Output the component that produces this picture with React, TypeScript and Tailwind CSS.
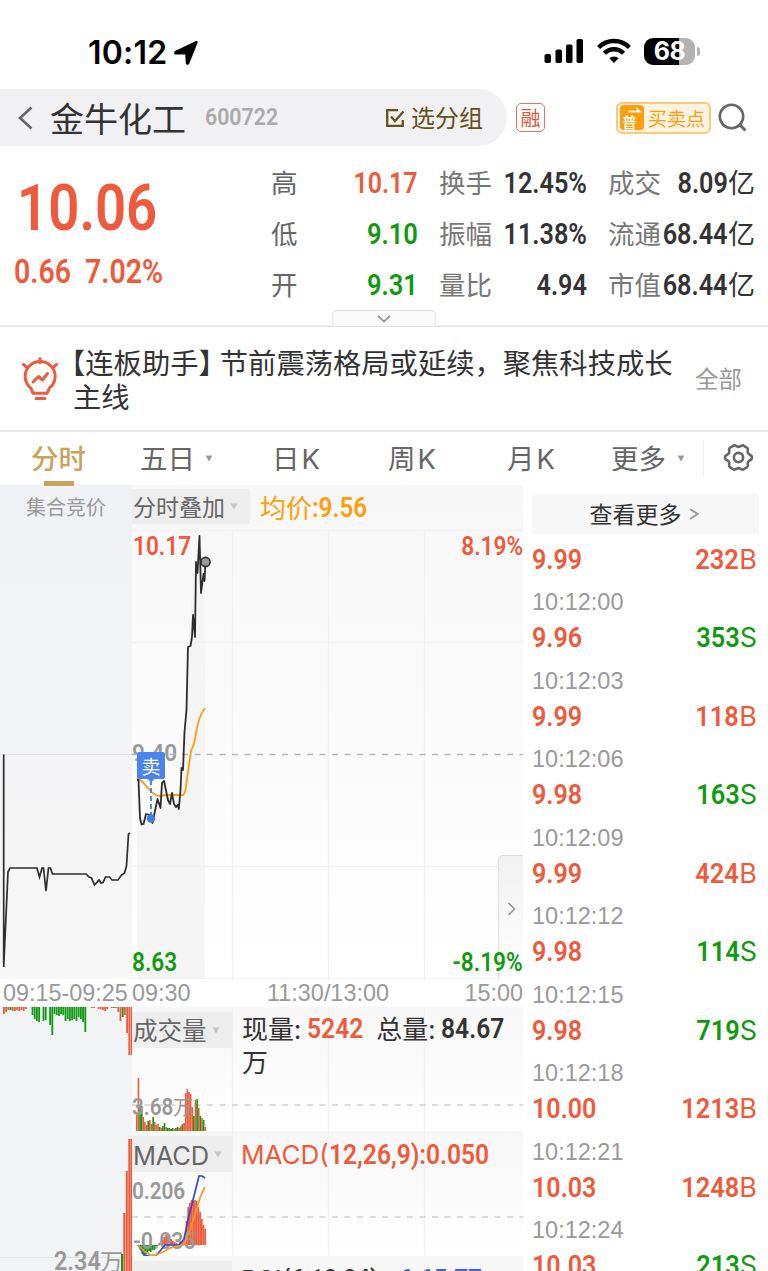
import { ReactNode } from "react";
import clsx from "clsx";

type Side = "B" | "S";

interface Trade {
    price: string;
    volume: string;
    side: Side;
    time: string;
}

interface Stat {
    label: string;
    value: string;
    unit?: string;
}

const trades: Trade[] = [
    { price: "9.99", volume: "232", side: "B", time: "10:12:00" },
    { price: "9.96", volume: "353", side: "S", time: "10:12:03" },
    { price: "9.99", volume: "118", side: "B", time: "10:12:06" },
    { price: "9.98", volume: "163", side: "S", time: "10:12:09" },
    { price: "9.99", volume: "424", side: "B", time: "10:12:12" },
    { price: "9.98", volume: "114", side: "S", time: "10:12:15" },
    { price: "9.98", volume: "719", side: "S", time: "10:12:18" },
    { price: "10.00", volume: "1213", side: "B", time: "10:12:21" },
    { price: "10.03", volume: "1248", side: "B", time: "10:12:24" },
    { price: "10.03", volume: "213", side: "S", time: "" },
];

const turnoverStats: Stat[] = [
    { label: "换手", value: "12.45%" },
    { label: "振幅", value: "11.38%" },
    { label: "量比", value: "4.94" },
];

const marketStats: Stat[] = [
    { label: "成交", value: "8.09", unit: "亿" },
    { label: "流通", value: "68.44", unit: "亿" },
    { label: "市值", value: "68.44", unit: "亿" },
];

const RED = "#ee5a3b";
const GREEN = "#109a10";

// [colour, height] per bar
const volumeBars: [string, number][] = [
    ["r", 16], ["r", 53], ["g", 25], ["g", 25], ["r", 14], ["r", 9], ["r", 6], ["g", 10], ["r", 11],
    ["r", 7], ["g", 14], ["r", 9], ["r", 6], ["r", 7], ["g", 4], ["r", 3], ["g", 5], ["g", 8],
    ["r", 4], ["g", 3], ["g", 3], ["g", 2], ["g", 3], ["r", 2], ["g", 3], ["g", 4], ["r", 3],
    ["r", 5], ["g", 7], ["r", 8], ["r", 38], ["r", 42], ["r", 39], ["r", 37], ["r", 24], ["g", 15],
    ["r", 31], ["g", 32], ["r", 23], ["g", 15], ["r", 13], ["g", 11], ["r", 4],
];

const macdBars = [
    -2, -5, -9, -11, -9, -9, -6, -7, -5, -5, -3, -1, 2, 4, 5, 8, 10, 9, 9, 6, 4, 3, 2, 1, 1, 2, 4, 9, 24, 38, 42, 45, 44, 45, 44, 38, 33, 26, 20, 16,
];

const auctionBars: [string, number][] = [
    ["r", 7], ["r", 5], ["r", 3], ["g", 3], ["r", 4], ["r", 4], ["r", 3], ["r", 4], ["r", 3], ["r", 4], ["r", 2], ["r", 0],
    ["g", 0], ["g", 8], ["g", 12], ["g", 14], ["g", 15], ["g", 0], ["g", 14], ["g", 13], ["g", 0], ["g", 18], ["g", 28], ["g", 7],
    ["g", 8], ["g", 9], ["g", 7], ["g", 8], ["g", 14], ["g", 12], ["g", 14], ["g", 13], ["g", 12], ["g", 14],
    ["g", 10], ["g", 12], ["g", 15], ["g", 25], ["g", 0], ["g", 0], ["r", 1], ["r", 1], ["r", 0], ["r", 2], ["r", 2],
    ["r", 3], ["r", 4], ["r", 2], ["g", 0], ["r", 1], ["g", 1], ["r", 1], ["r", 5], ["r", 14], ["g", 10], ["r", 8], ["r", 26], ["r", 48], ["r", 48],
];

const tone = (c: string) => (c === "r" ? RED : GREEN);

function Num({ children, className }: { children: ReactNode; className?: string }) {
    return (
        <span className={clsx("inline-block whitespace-nowrap font-['Roboto',sans-serif] font-semibold", className)}>
            {children}
        </span>
    );
}

function Caret({ className }: { className?: string }) {
    return (
        <svg className={className} width="8" height="7" viewBox="0 0 8 7">
            <path d="M0.5 0.5h7L4 6.5z" fill="currentColor" />
        </svg>
    );
}

function StatusBar() {
    return (
        <div className="flex h-[89px] shrink-0 items-start justify-between pt-[37px] pr-[68px] pl-[88px]">
            <div className="flex items-center">
                <span className="w-[80px] pt-px font-['Inter',sans-serif] text-[32px] leading-[30px] font-semibold tracking-[0.2px] whitespace-nowrap text-black">
                    10:12
                </span>
                <svg className="ml-[5px]" width="26" height="26" viewBox="0 0 26 26">
                    <path
                        d="M2.500 12 23.500 2.200 15 23.500 14 23.500 13.400 13.400 2.500 13.400z"
                        fill="#000"
                        stroke="#000"
                        strokeWidth="2.400"
                        strokeLinejoin="round"
                    />
                </svg>
            </div>
            <div className="flex items-center">
                <svg width="40" height="28" viewBox="0 0 40 28">
                    <rect x="0.5" y="17" width="6.5" height="9" rx="1.8" />
                    <rect x="11.500" y="12.500" width="6.5" height="13.500" rx="1.800" />
                    <rect x="22" y="7.500" width="6.5" height="18.500" rx="1.800" />
                    <rect x="32.500" y="2" width="6.5" height="24" rx="1.800" />
                </svg>
                <svg className="ml-[13px]" width="34" height="28" viewBox="0 0 34 28" fill="none" stroke="#000" strokeWidth="4.300">
                    <path d="M1.600 10.500a21.500 21.500 0 0 1 30.800 0" />
                    <path d="M7.400 16.300a13.400 13.400 0 0 1 19.200 0" />
                    <path d="M17 26l-4.600-4.700a6.500 6.500 0 0 1 9.200 0z" fill="#000" stroke="none" />
                </svg>
                <div className="ml-[13px] flex h-[27px] w-[51px] items-center justify-center rounded-[9px] bg-[linear-gradient(90deg,#000_68%,#b3b3b3_68%)]">
                    <span className="font-['Inter',sans-serif] text-[25px] leading-[27px] font-bold tracking-[-0.5px] text-white">68</span>
                </div>
                <div className="ml-[2px] h-[9px] w-[3px] rounded-r-full bg-[#b3b3b3]" />
            </div>
        </div>
    );
}

function TitleBar() {
    return (
        <div className="flex h-[57px] shrink-0 items-center">
            <div className="flex h-full w-[507px] items-center rounded-r-[29px] bg-[#f1f1f3]">
                <svg className="ml-[17px]" width="16" height="24" viewBox="0 0 16 24" fill="none" stroke="#666" strokeWidth="2.600">
                    <path d="M14.500 1.500 3 12l11.500 10.500" />
                </svg>
                <span className="ml-[17px] w-[138px] text-[34px] leading-[55px] whitespace-nowrap text-[#333]">金牛化工</span>
                <Num className="ml-[17px] w-[79px] origin-left scale-x-[0.87] text-[24.500px] font-medium text-[#aaa]">600722</Num>
                <svg className="ml-[101px]" width="20" height="20" viewBox="0 0 20 20" fill="none" stroke="#665018" strokeWidth="2.300">
                    <path d="M13 2.200H2.200v15.600h15.600V12" />
                    <path d="m6 8.500 4 4.500 8.500-9.500" />
                </svg>
                <span className="mt-[-2px] ml-[6px] text-[24px] whitespace-nowrap text-[#665018]">选分组</span>
            </div>
            <div className="ml-[9px] flex size-[29px] items-center justify-center rounded-[5px] border-[1.500px] border-[#e5735c] text-[20px] leading-none text-[#e2583c]">
                融
            </div>
            <div className="ml-[71px] flex h-[32px] w-[95px] items-center rounded-[6px] border-2 border-[#fbc977] bg-[#fdf3e3] pl-[2px]">
                <div className="relative flex h-[25px] w-[24px] items-end justify-start rounded-[4px] bg-[#ff9d0a] pl-[2px] text-[15px] leading-[17px] font-medium text-white">
                    普
                    <svg className="absolute top-[2px] left-[8px]" width="15" height="6" viewBox="0 0 15 6">
                        <path d="M0 3.800h9L7.500 0 14.500 5.500H0z" fill="#fff" />
                    </svg>
                </div>
                <span className="ml-[4px] text-[19px] leading-none whitespace-nowrap text-[#ff9d0a]">买卖点</span>
            </div>
            <svg className="ml-[7px]" width="29" height="29" viewBox="0 0 29 29" fill="none" stroke="#666" strokeWidth="2.600">
                <circle cx="13.500" cy="13.500" r="11.700" />
                <path d="m21.500 21.500 6 6" strokeWidth="3" />
            </svg>
        </div>
    );
}

function StatColumn({ stats, className }: { stats: Stat[]; className?: string }) {
    return (
        <div className={clsx("flex flex-col", className)}>
            {stats.map(stat => (
                <div key={stat.label} className="flex h-[51px] items-center whitespace-nowrap">
                    <span className="w-[53px] shrink-0 pb-[4px] text-[26.500px]">{stat.label}</span>
                    <span className="flex min-w-0 flex-1 items-center justify-end text-[#333]">
                        <Num className="origin-right scale-x-[0.87] text-[29px]">{stat.value}</Num>
                        {stat.unit && <span className="pb-[3px] text-[27px]">{stat.unit}</span>}
                    </span>
                </div>
            ))}
        </div>
    );
}

function Quote() {
    return (
        <div className="relative flex h-[181px] shrink-0 border-b-2 border-[#e8e8e8] pt-[12px]">
            <div className="w-[271px]">
                <Num className="mt-[12px] ml-[17px] block origin-left scale-x-[0.84] text-[65px] leading-[76px] text-[#ee5a3b]">10.06</Num>
                <div className="mt-[5px] flex text-[34px] leading-[40px] text-[#ee5a3b]">
                    <Num className="ml-[14px] w-[71px] origin-left scale-x-[0.84]">0.66</Num>
                    <Num className="w-[80px] origin-left scale-x-[0.84]">7.02%</Num>
                </div>
            </div>
            <div className="w-[147px] text-[26.500px] text-[#666]">
                <div className="flex h-[51px] items-center justify-between">
                    <span className="pb-[4px]">高</span>
                    <Num className="origin-right scale-x-[0.86] text-[29px] text-[#ee5a3b]">10.17</Num>
                </div>
                <div className="flex h-[51px] items-center justify-between">
                    <span className="pb-[4px]">低</span>
                    <Num className="origin-right scale-x-[0.88] text-[29px] text-[#109a10]">9.10</Num>
                </div>
                <div className="flex h-[51px] items-center justify-between">
                    <span className="pb-[4px]">开</span>
                    <Num className="origin-right scale-x-[0.88] text-[29px] text-[#109a10]">9.31</Num>
                </div>
            </div>
            <StatColumn stats={turnoverStats} className="ml-[21px] w-[148px] text-[#777]" />
            <StatColumn stats={marketStats} className="ml-[21px] w-[147px] text-[#777]" />
            <div className="absolute bottom-[-1px] left-[332px] flex h-[16px] w-[104px] items-center justify-center rounded-t-[5px] border-[1.500px] border-b-0 border-[#e3e3e3] bg-[#fafafa]">
                <svg width="14" height="8" viewBox="0 0 14 8" fill="none" stroke="#999" strokeWidth="1.800">
                    <path d="m1 1 6 5.500L13 1" />
                </svg>
            </div>
        </div>
    );
}

function News() {
    return (
        <div className="flex h-[105px] shrink-0 border-b-2 border-[#e8e8e8]">
            <svg className="mt-[29px] ml-[21px] shrink-0" width="38" height="46" viewBox="0 0 38 46" fill="none" stroke="#ee5a3b" strokeWidth="3" strokeLinecap="round" strokeLinejoin="round">
                <path d="M12 37.300h14l2.300-5A15 15 0 1 0 10 32.300z" />
                <path d="m12 26 5.500-5.500 4 3.500 5-6.500" />
                <path d="M19 2.500v4M2.500 8.500 5.500 11M35.500 8.500 32.500 11M15 42.500h9" />
            </svg>
            <div className="mt-[18px] -ml-[2px] w-[632px] text-[28.300px] leading-[34px] whitespace-nowrap text-[#333]">
                <div>【连板助手】<span className="-ml-[7px]">节前震荡格局或延续，聚焦科技成长</span></div>
                <div className="pl-[16px]">主线</div>
            </div>
            <span className="mt-[34px] ml-[6px] text-[23.500px] leading-[34px] whitespace-nowrap text-[#999]">全部</span>
        </div>
    );
}

function Tabs() {
    return (
        <div className="flex h-[54px] shrink-0 items-start text-[27.500px] leading-[51px] whitespace-nowrap text-[#666]">
            <div className="relative h-[54px] w-[140px] pl-[31px] font-medium text-[#c9a35c]">
                分时
                <div className="absolute bottom-0 left-[44px] h-[5px] w-[30px] bg-[#c9a35c]" />
            </div>
            <div className="flex w-[132px] items-center">
                五日<Caret className="mt-[2px] ml-[10px] text-[#999]" />
            </div>
            <div className="w-[116px]">日<span className="ml-[2px] font-['Inter',sans-serif]">K</span></div>
            <div className="w-[119px]">周<span className="ml-[2px] font-['Inter',sans-serif]">K</span></div>
            <div className="w-[104px]">月<span className="ml-[2px] font-['Inter',sans-serif]">K</span></div>
            <div className="flex w-[92px] items-center">
                更多<Caret className="mt-[2px] ml-[11px] text-[#999]" />
            </div>
            <div className="mt-[9px] h-[35px] w-px bg-[#eee]" />
            <svg className="mt-[11px] ml-[19px]" width="31" height="29" viewBox="0 0 31 29" fill="none" stroke="#666" strokeWidth="2.600" strokeLinejoin="round">
                <path d="M9.700 3.200Q11 1.500 13 3l2.500 1 2.500-1q2-1.500 3.300.2l2.500 1.400q1.600 1 .9 3l.2 2.400 1.900 1.700q2.200.9 2.200 2.800t-2.200 2.800L24.900 19l-.2 2.400q.7 2-.9 3l-2.500 1.400Q20 27.500 18 26l-2.500-1-2.500 1q-2 1.500-3.300-.2l-2.500-1.400q-1.600-1-.9-3L6.100 19l-1.900-1.700Q2 16.400 2 14.500t2.200-2.800L6.100 10l.2-2.400q-.7-2 .9-3z" />
                <circle cx="15.500" cy="14.500" r="4.600" />
            </svg>
        </div>
    );
}

function AuctionPrice() {
    return (
        <div className="h-[494px] w-[132px] bg-linear-to-b from-[#f0f1f4] to-[#f7f7f7]">
            <div className="relative">
                <svg width="132" height="494" viewBox="0 485 132 494" fill="none">
                    <path d="M0 754.500H132" stroke="#e3e3e5" />
                    <path
                        d="M3.700 754.500V967L8 872l2-4h27l2.500 9 2.500-9h1.500l2.500 23 2.500-23h2l2 6H86l3 3 2.500 1 3 7 4.500-5 2 3 2-.5 2.500-5.500h4l2.500 3h6l3.500-5 3-2 2-7 2-32 1.500-1"
                        stroke="#2e2e2e"
                        strokeWidth="1.700"
                    />
                </svg>
                <span className="absolute top-[7px] left-[26px] text-[20px] leading-[30px] whitespace-nowrap text-[#999]">集合竞价</span>
            </div>
        </div>
    );
}

function PriceChart() {
    return (
        <div className="relative h-[494px] w-[391px] bg-linear-to-b from-[#f7f7f7] to-white">
            <svg width="391" height="494" viewBox="132 485 391 494" fill="none">
                <path d="M137 780V978H205V562L199 536 194 562 188 647 182 768 178 806 162 783 157 800 143 824z" fill="#f5f5f5" />
                <path d="M132 530.500H523M132 642.500H523M132 866.500H523M132 978.500H523M232.500 530V978M328.500 530V978M424.500 530V978" stroke="#f1f1f1" strokeWidth="1.300" />
            </svg>
            <Num className="absolute top-[254px] left-[0px] origin-left scale-x-[0.92] text-[24.500px] leading-[28px] font-medium text-[#999]">9.40</Num>
            <svg className="absolute inset-0" width="391" height="494" viewBox="132 485 391 494" fill="none">
                <path d="M132 754.500H523" stroke="#b5b5b5" strokeWidth="1.300" strokeDasharray="6 6.500" />
                <path d="M137 779c5 0 7 5 11 9 3 4 7 8 12 8l6-1h15q4 2 5-9l5-35c3-7 3-5 5-18q3-18 9-25" stroke="#ff9d0a" strokeWidth="1.800" />
                <path
                    d="M137 780h1.500l1.500 38 1.500 6.500 2-.5 2.500-10 4 1 2.500 8 5-24 3 9 1.500-25 2-2 4 19 2 4 2-11 2 11 2 3 2-2 .8 4 1.700-19 1-22 1.500 2 1.500-38 2-22 1.500-63 2.500-1 1.500-9 1-22 2 22 1-75 1.500 11 2-37 1.500 57 2.500-19 1 7 1-19"
                    stroke="#2e2e2e"
                    strokeWidth="1.800"
                    strokeLinejoin="round"
                />
                <circle cx="205.500" cy="562" r="4.600" fill="#999" stroke="#2e2e2e" strokeWidth="1.600" />
                <path d="M151 780V815" stroke="#3d7de8" strokeWidth="1.800" strokeDasharray="5 3" />
                <circle cx="151" cy="818.500" r="4.200" fill="#3d7de8" />
                <path d="M147.500 779h7l-3.500 3.500z" fill="#4b84ea" />
            </svg>
            <div className="absolute top-[267px] left-[5px] flex h-[27px] w-[28px] items-center justify-center rounded-[2px] bg-[#4b84ea] text-[19px] leading-none text-white">卖</div>
            <div className="absolute top-[4px] left-0 flex h-[35px] w-[118px] items-center bg-[#eeeeef] pl-px text-[23px] whitespace-nowrap text-[#666]">
                分时叠加<Caret className="ml-[5px] text-[#c4c4c4]" />
            </div>
            <div className="absolute top-[4px] left-[128px] flex h-[35px] items-center text-[26px] whitespace-nowrap text-[#ff9d0a]">
                均价<Num className="mt-[3px] origin-left scale-x-[0.9] text-[27px]">:9.56</Num>
            </div>
            <Num className="absolute top-[46px] left-[1px] origin-left scale-x-[0.87] text-[26px] leading-[30px] text-[#ee5a3b]">10.17</Num>
            <Num className="absolute top-[46px] right-0 origin-right scale-x-[0.87] text-[26px] leading-[30px] text-[#ee5a3b]">8.19%</Num>
            <div className="absolute top-[370px] right-0 flex h-[124px] w-[25px] items-start justify-center rounded-tl-[5px] border-t border-l border-[#e0e0e0] bg-linear-to-b from-[#f1f1f1] to-white pt-[46px]">
                <svg width="9" height="14" viewBox="0 0 9 14" fill="none" stroke="#999" strokeWidth="1.700">
                    <path d="m1.500 1 6 6-6 6" />
                </svg>
            </div>
            <Num className="absolute top-[462px] left-0 origin-left scale-x-[0.87] text-[26px] leading-[30px] text-[#109a10]">8.63</Num>
            <Num className="absolute top-[462px] right-0 origin-right scale-x-[0.87] text-[26px] leading-[30px] text-[#109a10]">-8.19%</Num>
        </div>
    );
}

function TimeAxis() {
    return (
        <div className="flex h-[28px] items-center bg-white font-['Liberation_Sans',sans-serif] text-[23.400px] leading-[28px] whitespace-nowrap text-[#999]">
            <span className="w-[132px] pl-[3px]">09:15-09:25</span>
            <span className="w-[130px]">09:30</span>
            <span className="w-[132px] text-center">11:30/13:00</span>
            <span className="w-[129px] text-right">15:00</span>
        </div>
    );
}

function AuctionVolume() {
    return (
        <div className="relative h-[264px] w-[132px] bg-[#f2f3f5]">
            <svg width="132" height="264" viewBox="0 1007 132 264">
                {auctionBars.map(([c, h], i) => (
                    <rect key={i} x={3 + i * 2.2} y="1007" width="1.800" height={h} fill={tone(c)} />
                ))}
                <path d="M0 1257.500H132" stroke="#e3e3e5" />
                <path d="M123.300 1213h2v58h-2zM125.800 1171h2v100h-2zM128.300 1139h1.700v132h-1.700zM130.300 1139h1.700v132h-1.700z" fill={RED} />
                <path d="M121 1254h2v17h-2z" fill={GREEN} />
            </svg>
            <div className="absolute top-[238px] left-[54px] flex items-center text-[23px] leading-[28px] whitespace-nowrap text-[#999]">
                <Num className="mt-[2px] w-[46px] origin-left scale-x-[0.9] text-[26px] font-medium">2.34</Num>万
            </div>
        </div>
    );
}

function IndicatorLabel({ children }: { children: ReactNode }) {
    return (
        <div className="absolute top-[5px] left-0 flex h-[36px] w-[100px] items-center bg-[#eeeeef] pl-px text-[24.500px] whitespace-nowrap text-[#666]">
            {children}
            <Caret className="ml-[5px] text-[#c4c4c4]" />
        </div>
    );
}

function VolumePanel() {
    return (
        <div className="relative h-[124px] bg-linear-to-b from-[#f7f7f7] to-white">
            <svg width="391" height="124" viewBox="132 1007 391 124">
                <path d="M232.500 1007V1131M328.500 1007V1131M424.500 1007V1131" stroke="#f1f1f1" strokeWidth="1.300" />
                <path d="M132 1105H523" stroke="#cfcfcf" strokeWidth="1.600" strokeDasharray="6 6.500" />
                {volumeBars.map(([c, h], i) => (
                    <rect key={i} x={136 + i * 1.63} y={1131 - h} width="1.630" height={h} fill={tone(c)} />
                ))}
            </svg>
            <IndicatorLabel>成交量</IndicatorLabel>
            <div className="absolute top-[85px] left-0 flex items-center text-[20px] leading-[28px] whitespace-nowrap text-[#999]">
                <Num className="mt-[2px] w-[41px] origin-left scale-x-[0.9] text-[23px] font-medium">3.68</Num>万
            </div>
            <div className="absolute top-[4px] left-[110px] text-[26px] leading-[32px] whitespace-nowrap text-[#333]">
                <div className="flex items-center">
                    现量:<Num className="mt-[2px] ml-[6px] w-[69px] origin-left scale-x-[0.88] text-[28px] text-[#ee5a3b]">5242</Num>
                    总量:<Num className="mt-[2px] ml-[6px] origin-left scale-x-[0.88] text-[28px]">84.67</Num>
                </div>
                <div>万</div>
            </div>
        </div>
    );
}

function MacdPanel() {
    return (
        <div className="relative h-[125px] bg-linear-to-b from-[#f7f7f7] to-white">
            <svg width="391" height="125" viewBox="132 1131 391 125">
                <path d="M232.500 1131V1256M328.500 1131V1256M424.500 1131V1256" stroke="#f1f1f1" strokeWidth="1.300" />
                <path d="M132 1217H523" stroke="#cfcfcf" strokeWidth="1.600" strokeDasharray="6 6.500" />
                {macdBars.map((h, i) => (
                    <rect key={i} x={138 + i * 1.7} y={h > 0 ? 1245 - h : 1245} width="1.750" height={Math.abs(h)} fill={h > 0 ? RED : GREEN} />
                ))}
            </svg>
            <IndicatorLabel><span className="pt-[5px] font-['Inter',sans-serif] text-[25.500px] tracking-[-0.2px]">MACD</span></IndicatorLabel>
            <Num className="absolute top-[47px] left-0 origin-left scale-x-[0.9] text-[23px] leading-[28px] font-medium text-[#999]">0.206</Num>
            <Num className="absolute top-[97px] left-[1px] origin-left scale-x-[0.93] text-[23px] leading-[28px] font-medium text-[#999]">-0.035</Num>
            <svg className="absolute inset-0 overflow-visible" width="391" height="125" viewBox="132 1131 391 125" fill="none" strokeWidth="1.700">
                <path d="m138 1245 7 10 5 1.500h5l5-5.500 5-6h14l5-6 4-19 5-20 3-12 3-12h3l3 2" stroke="#3646d8" />
                <path d="m138 1245 7 7 6 3h5l7-3 7-4 13-3 7-15 7-22 4-13 4-8" stroke="#f79a1c" />
            </svg>
            <div className="absolute top-[6px] left-[109px] flex items-center font-['Inter',sans-serif] text-[26px] leading-[36px] whitespace-nowrap text-[#ee5a3b]">
                <span>MACD(</span>
                <Num className="origin-left scale-x-[0.91] text-[27px]">12,26,9):0.050</Num>
            </div>
        </div>
    );
}

function RsiPanel() {
    return (
        <div className="relative h-[15px] overflow-hidden bg-[#f7f7f7]">
            <IndicatorLabel><span className="pt-[4px] font-['Inter',sans-serif]">RSI</span></IndicatorLabel>
            <div className="absolute top-[6px] left-[109px] flex items-center font-['Inter',sans-serif] text-[26px] leading-[36px] whitespace-nowrap text-[#333]">
                RSI(<Num className="w-[108px] origin-left scale-x-[0.88] text-[27px]">6,12,24)</Num>
                <Num className="origin-left scale-x-[0.9] text-[27px] text-[#3c62e0]">6:65.77</Num>
            </div>
        </div>
    );
}

function TradeList() {
    return (
        <div className="w-[245px] pt-[9px] pr-[9px] pl-[9px]">
            <div className="flex h-[40px] items-center justify-center bg-[#f7f7f7] pr-[3px] text-[23px] leading-[38px] text-[#333]">
                <span className="pb-[2px]">查看更多</span>
                <svg className="ml-[7px]" width="10" height="14" viewBox="0 0 10 14" fill="none" stroke="#999" strokeWidth="1.900">
                    <path d="m1 2 7.500 5L1 12" />
                </svg>
            </div>
            <div className="pt-[7px]">
                {trades.map((trade, i) => (
                    <div key={i} className="h-[78.500px]">
                        <div className={clsx("flex h-[38px] items-center justify-between pr-[2px]", trade.side === "S" ? "text-[#109a10]" : "text-[#ee5a3b]")}>
                            <Num className="origin-left scale-x-[0.88] text-[28.500px] text-[#ee5a3b]">{trade.price}</Num>
                            <span className="flex items-center">
                                <Num className="origin-right scale-x-[0.89] text-[28.500px]">{trade.volume}</Num>
                                <span className="font-['Inter',sans-serif] text-[27px]">{trade.side}</span>
                            </span>
                        </div>
                        <div className="font-['Liberation_Sans',sans-serif] text-[23.500px] leading-[46px] text-[#999]">{trade.time}</div>
                    </div>
                ))}
            </div>
        </div>
    );
}

export default function App() {
    return (
        <div className="flex h-[1271px] w-[768px] flex-col overflow-hidden bg-white font-['Noto_Sans_CJK_SC',sans-serif]">
            <StatusBar />
            <TitleBar />
            <Quote />
            <News />
            <Tabs />
            {/* Charts on the left, tick list on the right */}
            <div className="-mt-px flex shrink-0">
                <div className="w-[523px]">
                    <div className="flex">
                        <AuctionPrice />
                        <PriceChart />
                    </div>
                    <TimeAxis />
                    <div className="flex">
                        <AuctionVolume />
                        <div className="w-[391px]">
                            <VolumePanel />
                            <MacdPanel />
                            <RsiPanel />
                        </div>
                    </div>
                </div>
                <TradeList />
            </div>
        </div>
    );
}
